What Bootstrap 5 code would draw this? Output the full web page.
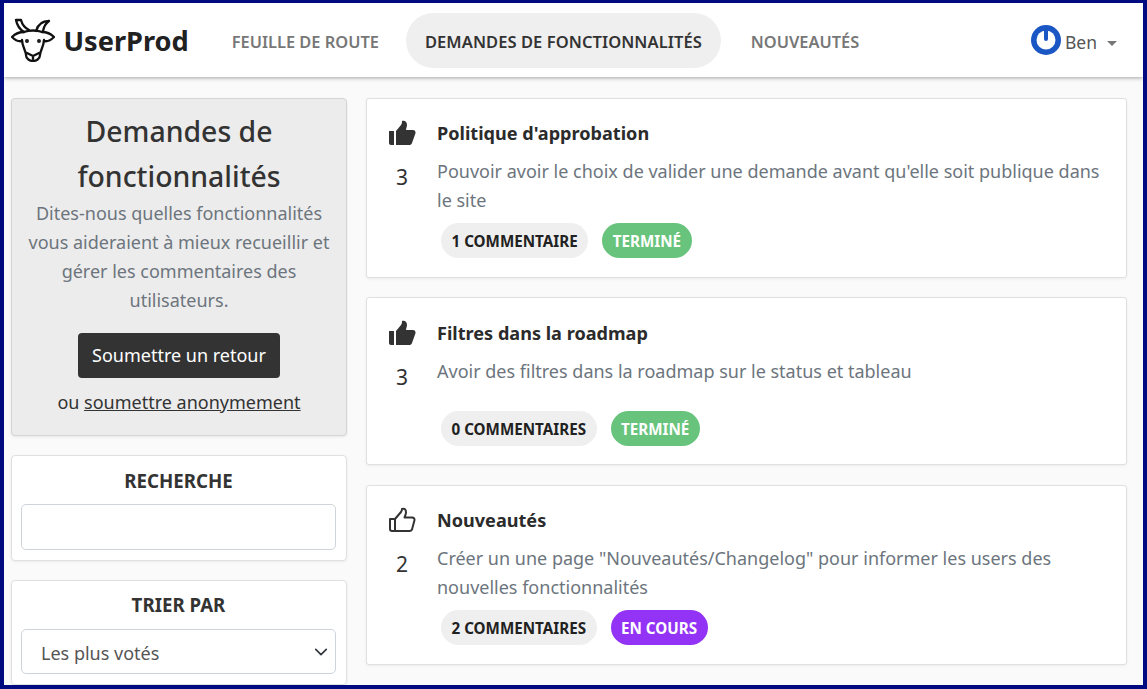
<!doctype html>
<html lang="fr">
<head>
<meta charset="utf-8">
<link href="https://cdn.jsdelivr.net/npm/bootstrap@5.3.0/dist/css/bootstrap.min.css" rel="stylesheet">
<style>
html,body{height:100%;overflow:hidden}
body{font-family:"Noto Sans","Open Sans",sans-serif;background:#fafafa;color:#212529}
.frame{height:689px;border:solid #000b80;border-width:3px 4px 4px 4px;overflow:hidden;display:flex;flex-direction:column}
.topbar{height:74px;flex:none;background:#fff;box-shadow:0 1px 4px rgba(0,0,0,.35);padding:0 26px 0 7px;position:relative;z-index:2}
.logo{flex:none}
.brand{font-size:27.2px;font-weight:700;color:#212121;margin-left:8.500px;margin-right:24px;padding-top:3px}
.toplink{font-size:16.4px;font-weight:600;color:#777;padding:4px 19px 0;height:55px;display:flex;align-items:center;border-radius:28px;text-decoration:none;margin-right:8px}
.toplink.on{background:#efefef;color:#333;font-size:16.5px;letter-spacing:.07px;margin-right:11px}
.who{color:#555;font-size:17.5px;padding-top:4px}
.who::after{content:"";display:inline-block;margin-left:10px;vertical-align:3px;border-top:5px solid #777;border-left:5px solid transparent;border-right:5px solid transparent}
.page{padding:21px 16px 0 7px;gap:19px;flex:1}
.side{width:336px;flex:none}
.hero{background:#ececec;border:1px solid #d5d5d5;border-radius:4px;height:338px;text-align:center;padding:10px 14px;box-shadow:0 1px 3px rgba(0,0,0,.08);margin-bottom:19px}
.hero h1{font-size:28.4px;font-weight:500;line-height:45px;margin:0;color:#333}
.hero p{font-size:18px;line-height:29px;color:#6c757d;margin:0 0 18px}
.sendbtn{background:#333;color:#fff;font-size:18px;padding:9px 14.500px;border-radius:4px;border:0;line-height:27px}
.hero .anon{font-size:18px;margin-top:11px;color:#333}
.hero .anon a{color:#333}
.box{background:#fff;border:1px solid #e0e0e0;border-radius:4px;padding:10px 10px 10px 9px;text-align:center;box-shadow:0 1px 3px rgba(0,0,0,.06);margin-bottom:19px}
.box h2{font-size:18.7px;font-weight:700;margin:0 0 8px;line-height:30px;color:#333}
.box + .box h2{margin-top:-1px;margin-bottom:9px}
.box .form-control{height:46px;border-radius:5px;border-color:#ced4da}
.box .form-select{height:45px;border-radius:5px;color:#555;font-size:18px;padding:9px 36px 5px 19px;border-color:#ced4da;background-position:right .3rem center;background-size:18px 14px}
.feed{flex:1;min-width:0}
.item{background:#fff;border:1px solid #e0e0e0;border-radius:3px;box-shadow:0 1px 3px rgba(0,0,0,.06);margin-bottom:19px;padding:21px 20px 0 20px;display:flex}
.i1{height:180px}.i2{height:168px;margin-bottom:20px;padding-top:22px}.i3{height:180px}
.vote{width:30px;text-align:center;flex:none;margin-right:20px;font-size:21px;color:#333;line-height:30px}
.vote svg{display:block;margin:0 auto 16px}
.ttl{font-size:18.1px;font-weight:700;line-height:26px;color:#2b2b2b;margin-bottom:11px}
.desc{font-size:18px;line-height:29px;color:#6c757d}
.pills{gap:14px;margin:8px 0 0 4px}
.pl{height:35px;border-radius:18px;padding:2px 10.500px 0;font-size:15.2px;font-weight:700;display:flex;align-items:center;background:#efefef;color:#212121}
.pl.ok{background:#68c37c;color:#fff}
.pl.wip{background:#9333f5;color:#fff}
.i2 .pills{margin-top:25px}
</style>
</head>
<body>
<div class="frame">
<nav class="topbar d-flex align-items-center">
  <svg class="logo" width="44" height="44" viewBox="0 0 44 44" fill="none" stroke="#111" stroke-width="2.300" stroke-linejoin="round" stroke-linecap="round"><path d="M5 2C6 7 8 11 13 14M5 2h5c1 4 4 8 8 10M38 3C32 3 27 6 25 13M38 3c-3 2-5 5-6 10"/><path d="M13 14c5-2 13-2 18 0M11 22c0 6 4 11 4 15 0 4 4 6 7 6s7-2 7-6c0-4 4-9 4-15"/><path d="M13 14C8 14 4 16 1 19c3 3 6 5 10 4M31 14c5 0 9 2 12 5-3 3-6 5-10 4M16 35l6 3 6-3M22 38v3"/><circle cx="16" cy="23" r=".8"/><circle cx="28" cy="23" r=".8"/></svg>
  <span class="brand">UserProd</span>
  <a class="toplink" href="#">FEUILLE DE ROUTE</a>
  <a class="toplink on" href="#">DEMANDES DE FONCTIONNALITÉS</a>
  <a class="toplink" href="#">NOUVEAUTÉS</a>
  <div class="ms-auto d-flex align-items-center gap-1">
    <svg width="30" height="30" viewBox="0 0 30 30"><circle cx="15" cy="15" r="15" fill="#1a56c4"/><circle cx="15" cy="15" r="9.500" fill="#fff"/><path d="M15 4v10" stroke="#1a56c4" stroke-width="4" stroke-linecap="round"/></svg>
    <span class="who">Ben</span>
  </div>
</nav>
<div class="page d-flex">
  <aside class="side">
    <div class="hero">
      <h1>Demandes de fonctionnalités</h1>
      <p>Dites-nous quelles fonctionnalités vous aideraient à mieux recueillir et gérer les commentaires des utilisateurs.</p>
      <button class="sendbtn">Soumettre un retour</button>
      <div class="anon">ou <a href="#">soumettre anonymement</a></div>
    </div>
    <div class="box">
      <h2>RECHERCHE</h2>
      <input class="form-control" type="text">
    </div>
    <div class="box">
      <h2>TRIER PAR</h2>
      <select class="form-select"><option>Les plus votés</option></select>
    </div>
  </aside>
  <main class="feed">
    <div class="item i1">
      <div class="vote"><svg width="28" height="26" viewBox="0 0 28 26"><path fill="#333" d="M1 11h5v14H3a2 2 0 0 1-2-2zM8 11l5-6c.7-1 1-2 1-4 3-1 5 1 5 4 0 2-1 3-1 5h7c2 0 3 2 2.400 3.500L24 23c-.5 1.500-1.500 2-3 2H8z"/></svg>3</div>
      <div class="flex-grow-1">
        <div class="ttl">Politique d'approbation</div>
        <div class="desc">Pouvoir avoir le choix de valider une demande avant qu'elle soit publique dans le site</div>
        <div class="pills d-flex"><span class="pl">1 COMMENTAIRE</span><span class="pl ok">TERMINÉ</span></div>
      </div>
    </div>
    <div class="item i2">
      <div class="vote"><svg width="28" height="26" viewBox="0 0 28 26"><path fill="#333" d="M1 11h5v14H3a2 2 0 0 1-2-2zM8 11l5-6c.7-1 1-2 1-4 3-1 5 1 5 4 0 2-1 3-1 5h7c2 0 3 2 2.400 3.500L24 23c-.5 1.500-1.500 2-3 2H8z"/></svg>3</div>
      <div class="flex-grow-1">
        <div class="ttl">Filtres dans la roadmap</div>
        <div class="desc">Avoir des filtres dans la roadmap sur le status et tableau</div>
        <div class="pills d-flex"><span class="pl">0 COMMENTAIRES</span><span class="pl ok">TERMINÉ</span></div>
      </div>
    </div>
    <div class="item i3">
      <div class="vote"><svg width="28" height="26" viewBox="0 0 28 26"><path fill="none" stroke="#333" stroke-width="2" stroke-linejoin="round" d="M2 12h5v12H4a2 2 0 0 1-2-2zM7 12l6-7c.7-1 1-2 1-3 3-1 4 1 4 3.500 0 2-1 3-1.500 5H24c2 0 2.800 1.500 2.400 3L24 22.500c-.5 1-1 1.500-2.500 1.500H7"/></svg>2</div>
      <div class="flex-grow-1">
        <div class="ttl">Nouveautés</div>
        <div class="desc">Créer un une page "Nouveautés/Changelog" pour informer les users des nouvelles fonctionnalités</div>
        <div class="pills d-flex"><span class="pl">2 COMMENTAIRES</span><span class="pl wip">EN COURS</span></div>
      </div>
    </div>
  </main>
</div>
</div>
</body>
</html>
